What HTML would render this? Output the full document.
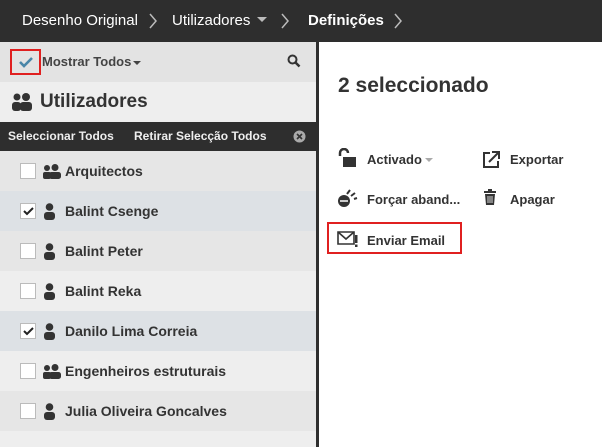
<!DOCTYPE html>
<html><head><meta charset="utf-8"><style>
*{margin:0;padding:0;box-sizing:border-box}
body{width:602px;height:447px;overflow:hidden;font-family:"Liberation Sans",sans-serif;background:#fff;position:relative;color:#333}
.top{position:absolute;left:0;top:0;width:602px;height:42px;background:#2e2e2e;color:#fff;font-size:15px}
.top span{position:absolute;top:12px}
.left{position:absolute;left:0;top:42px;width:316px;height:405px;background:#eee}
.div{position:absolute;left:316px;top:42px;width:3px;height:405px;background:#2e2e2e}
.abs{position:absolute}
.row{position:absolute;left:0;width:316px;height:40px;font-size:14px;font-weight:bold;color:#333}
.row .cb{position:absolute;left:20px;top:12px;width:16px;height:16px;border:1px solid #bbb;background:#fff}
.row .t{position:absolute;top:12px}
.act{position:absolute;font-size:13px;font-weight:bold;color:#333}
</style></head><body>
<div class="top">
<span style="left:22px">Desenho Original</span>
<svg class="abs" style="left:148px;top:12px" width="10" height="18"><path d="M2 2l6 7-6 7" stroke="#bbb" stroke-width="1.5" fill="none"/></svg>
<span style="left:172px">Utilizadores</span>
<svg class="abs" style="left:257px;top:17px" width="10" height="6"><path d="M0 0h10L5 5z" fill="#bbb"/></svg>
<svg class="abs" style="left:280px;top:12px" width="10" height="18"><path d="M2 2l6 7-6 7" stroke="#bbb" stroke-width="1.5" fill="none"/></svg>
<span style="left:308px;font-weight:bold">Definições</span>
<svg class="abs" style="left:393px;top:12px" width="10" height="18"><path d="M2 2l6 7-6 7" stroke="#bbb" stroke-width="1.5" fill="none"/></svg>
</div>
<div class="left">
<div class="abs" style="left:0;top:0;width:316px;height:40px;background:#e3e3e3"></div>
<div class="abs" style="left:10px;top:7px;width:31px;height:26px;border:2px solid #e02020"></div>
<svg class="abs" style="left:18px;top:14px" width="16" height="12"><path d="M2 6l4 4 8-8" stroke="#4a86a8" stroke-width="2.6" fill="none"/></svg>
<div class="abs" style="left:42px;top:12px;font-size:13px;font-weight:bold;color:#444">Mostrar Todos</div>
<svg class="abs" style="left:133px;top:19px" width="8" height="5"><path d="M0 0h8L4 4z" fill="#444"/></svg>
<svg class="abs" style="left:287px;top:12px" width="14" height="14"><circle cx="5.5" cy="5.5" r="4" stroke="#333" stroke-width="2" fill="none"/><path d="M8.5 8.5l4 4" stroke="#333" stroke-width="2.5"/></svg>
<svg class="abs" style="left:11px;top:51px" width="22" height="18"><circle cx="6" cy="4" r="3.5" fill="#333"/><circle cx="15" cy="4" r="4" fill="#333"/><rect x="1" y="9" width="9" height="9" rx="3" fill="#333"/><rect x="9" y="9" width="12" height="9" rx="3" fill="#333"/></svg>
<div class="abs" style="left:40px;top:49px;font-size:19px;font-weight:bold;color:#333">Utilizadores</div>
<div class="abs" style="left:0;top:80px;width:316px;height:29px;background:#2e2e2e;color:#eee;font-size:12px;font-weight:bold">
<span class="abs" style="left:8px;top:7px">Seleccionar Todos</span>
<span class="abs" style="left:134px;top:7px">Retirar Selecção Todos</span>
<svg class="abs" style="left:293px;top:8px" width="13" height="13"><circle cx="6.5" cy="6.5" r="6" fill="#aaa"/><path d="M4 4l5 5M9 4l-5 5" stroke="#333" stroke-width="1.6"/></svg>
</div>
</div>
<div class="div"></div>
<div id="rows"></div>
<script>
var data=[["Arquitectos",1,0,"#e6e6e6"],["Balint Csenge",0,1,"#dde1e5"],["Balint Peter",0,0,"#e6e6e6"],["Balint Reka",0,0,"#eeeeee"],["Danilo Lima Correia",0,1,"#dde1e5"],["Engenheiros estruturais",1,0,"#eeeeee"],["Julia Oliveira Goncalves",0,0,"#e6e6e6"]];
var h="";
data.forEach(function(d,i){var y=151+i*40;
var icon=d[1]?'<svg class="abs" style="left:42px;top:13px" width="20" height="15"><circle cx="5" cy="4" r="3" fill="#333"/><circle cx="13" cy="3.5" r="3.5" fill="#333"/><rect x="1" y="8" width="8" height="7" rx="2" fill="#333"/><rect x="7" y="8" width="12" height="7" rx="2.5" fill="#333"/></svg>':'<svg class="abs" style="left:43px;top:12px" width="13" height="17"><circle cx="6.5" cy="4" r="3.8" fill="#333"/><rect x="1" y="9" width="11" height="8" rx="3" fill="#333"/></svg>';
var chk=d[2]?'<svg class="abs" style="left:2px;top:3px" width="11" height="9"><path d="M1 4l3 3 6-6" stroke="#222" stroke-width="2" fill="none"/></svg>':'';
h+='<div class="row" style="top:'+y+'px;background:'+d[3]+'"><div class="cb">'+chk+'</div>'+icon+'<span class="t" style="left:65px">'+d[0]+'</span></div>';});
h+='<div class="row" style="top:431px;height:16px;background:#eee"></div>';
document.getElementById('rows').innerHTML=h;
</script>
<div class="abs" style="left:338px;top:74px;font-size:21px;font-weight:bold;color:#333">2 seleccionado</div>
<svg class="abs" style="left:337px;top:148px" width="22" height="20"><path d="M3 8V5a4 4 0 0 1 8 0" stroke="#333" stroke-width="2.5" fill="none"/><rect x="6" y="9" width="13" height="10" fill="#333"/></svg>
<div class="act" style="left:367px;top:152px">Activado</div>
<svg class="abs" style="left:425px;top:158px" width="8" height="5"><path d="M0 0h8L4 4z" fill="#aaa"/></svg>
<svg class="abs" style="left:482px;top:150px" width="18" height="18"><path d="M8 3H2v14h14v-6" stroke="#333" stroke-width="2" fill="none"/><path d="M7 12l9-9M10 2h7v7" stroke="#333" stroke-width="2" fill="none"/></svg>
<div class="act" style="left:510px;top:152px">Exportar</div>
<svg class="abs" style="left:337px;top:188px" width="22" height="20"><circle cx="7" cy="13" r="6" fill="#333"/><path d="M3 13h8" stroke="#fff" stroke-width="1.5"/><path d="M10 6l3-4M14 8l4-3M17 11l3-1" stroke="#333" stroke-width="2"/></svg>
<div class="act" style="left:367px;top:192px">Forçar aband...</div>
<svg class="abs" style="left:484px;top:189px" width="12" height="16"><rect x="0" y="2" width="12" height="2" fill="#333"/><rect x="4" y="0" width="4" height="2" fill="#333"/><path d="M1 5h10l-1 11H2z" fill="#333"/><path d="M4 7v7M6 7v7M8 7v7" stroke="#fff" stroke-width="0.8"/></svg>
<div class="act" style="left:510px;top:192px">Apagar</div>
<div class="abs" style="left:327px;top:222px;width:135px;height:32px;border:2px solid #e02020"></div>
<svg class="abs" style="left:337px;top:230px" width="22" height="18"><path d="M1 2h16v12H1z" stroke="#333" stroke-width="1.6" fill="none"/><path d="M1 2l8 7 8-7" stroke="#333" stroke-width="1.6" fill="none"/><rect x="18" y="5" width="2.5" height="8" fill="#333"/><rect x="18" y="14.5" width="2.5" height="2.5" fill="#333"/></svg>
<div class="act" style="left:367px;top:233px">Enviar Email</div>
</body></html>
